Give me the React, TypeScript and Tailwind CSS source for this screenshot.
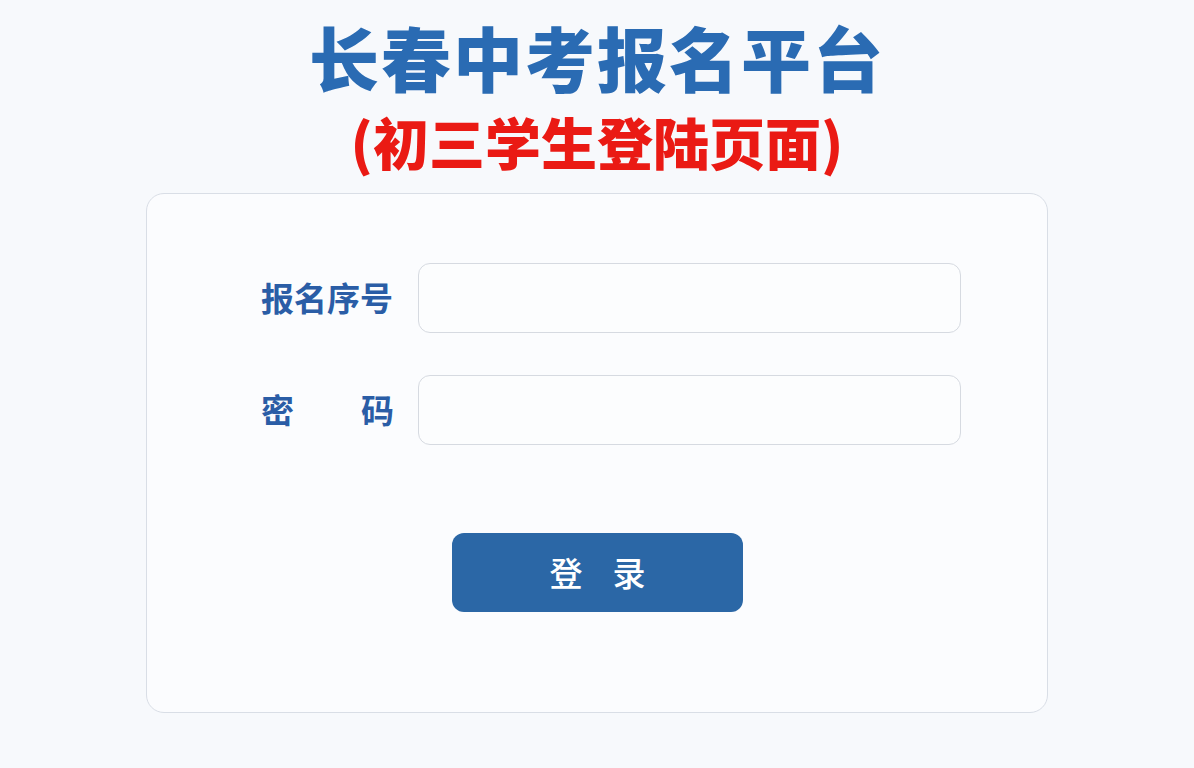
import { useState } from 'react';

const CJK = { fontFamily: '"Noto Sans CJK SC", "Noto Sans", sans-serif' };

export default function App() {
    const [serial, setSerial] = useState('');
    const [password, setPassword] = useState('');

    return (
        <div
            className="flex h-[768px] w-full flex-col items-center bg-[#f7f9fc]"
            style={CJK}
        >
            {/* Heading */}
            <h1 className="mt-[19px] text-[70px] leading-[76px] font-black tracking-[2px] text-[#2a6bb3]">
                长春中考报名平台
            </h1>
            <h2 className="mt-[15px] text-[56px] leading-[62px] font-black text-[#ea1a14]">
                (初三学生登陆页面)
            </h2>

            {/* Login card */}
            <div className="mt-[21px] flex h-[520px] w-[902px] flex-col rounded-[18px] border border-[#d9dee6] bg-[#fbfcfe] pt-[69px] pl-[114px]">
                <div className="flex items-center gap-[24px]">
                    <label className="w-[133px] text-[33px] font-bold text-[#2a5da6]">
                        报名序号
                    </label>
                    <input
                        className="h-[70px] w-[543px] rounded-[12px] border border-[#d6dae1] bg-[#fcfdfe] px-4 text-[24px] outline-none"
                        value={serial}
                        onChange={e => setSerial(e.target.value)}
                    />
                </div>
                <div className="mt-[42px] flex items-center gap-[24px]">
                    <label className="flex w-[133px] justify-between text-[33px] font-bold text-[#2a5da6]">
                        <span>密</span>
                        <span>码</span>
                    </label>
                    <input
                        type="password"
                        className="h-[70px] w-[543px] rounded-[12px] border border-[#d6dae1] bg-[#fcfdfe] px-4 text-[24px] outline-none"
                        value={password}
                        onChange={e => setPassword(e.target.value)}
                    />
                </div>
                <button
                    type="button"
                    className="mt-[88px] ml-[191px] flex h-[79px] w-[291px] cursor-pointer items-center justify-center gap-[30px] rounded-[12px] bg-[#2b67a6] text-[33px] font-medium text-white"
                >
                    <span>登</span>
                    <span>录</span>
                </button>
            </div>
        </div>
    );
}
